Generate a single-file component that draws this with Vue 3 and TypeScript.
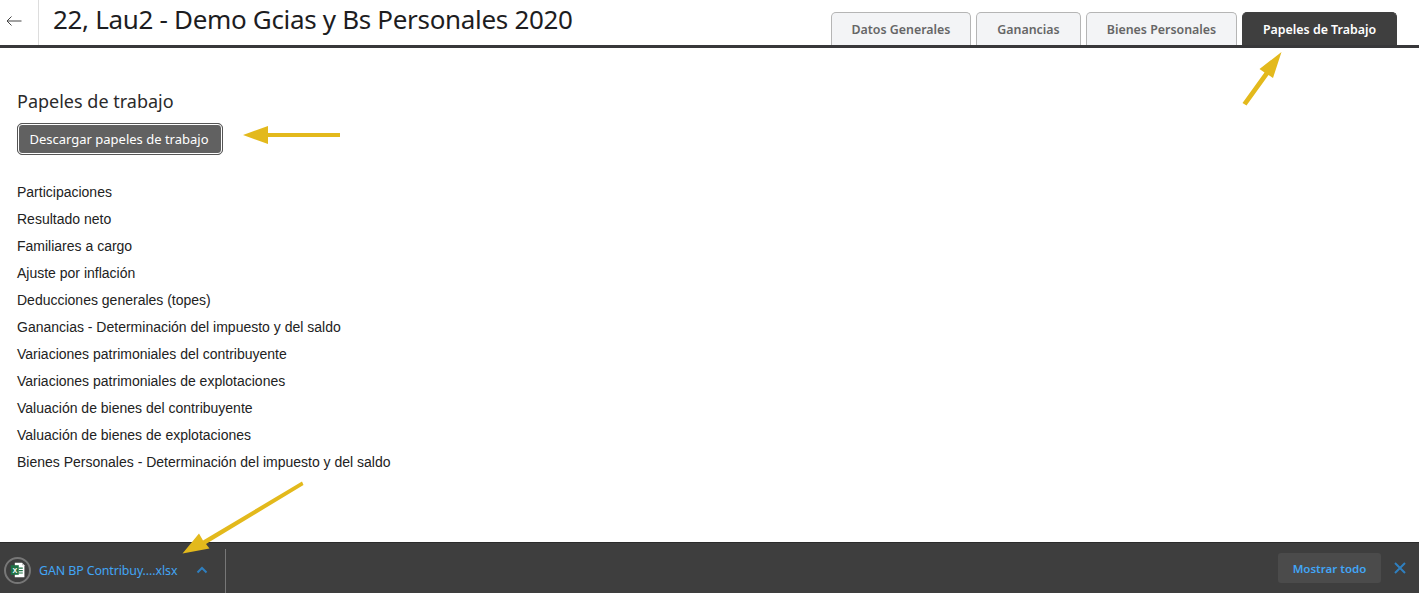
<script setup lang="ts">
const tabs = [
  { label: 'Datos Generales', width: 140 },
  { label: 'Ganancias', width: 105 },
  { label: 'Bienes Personales', width: 151 },
  { label: 'Papeles de Trabajo', width: 155, active: true },
]

const papeles = [
  'Participaciones',
  'Resultado neto',
  'Familiares a cargo',
  'Ajuste por inflación',
  'Deducciones generales (topes)',
  'Ganancias - Determinación del impuesto y del saldo',
  'Variaciones patrimoniales del contribuyente',
  'Variaciones patrimoniales de explotaciones',
  'Valuación de bienes del contribuyente',
  'Valuación de bienes de explotaciones',
  'Bienes Personales - Determinación del impuesto y del saldo',
]
</script>

<template>
  <div class="page">
    <header class="header">
      <button class="back" aria-label="Volver">
        <svg width="16" height="12" viewBox="0 0 16 12" fill="none" stroke="#444" stroke-width="1">
          <path d="M15.5 6H1M5.5 1.5L1 6l4.5 4.5" />
        </svg>
      </button>
      <h1 class="title">22, Lau2 - Demo Gcias y Bs Personales 2020</h1>
      <nav class="tabs">
        <div
          v-for="tab in tabs"
          :key="tab.label"
          class="tab"
          :class="{ active: tab.active }"
          :style="{ width: tab.width + 'px' }"
        >
          {{ tab.label }}
        </div>
      </nav>
    </header>

    <main class="content">
      <h2 class="heading">Papeles de trabajo</h2>
      <button class="download">Descargar papeles de trabajo</button>
      <ul class="list">
        <li v-for="item in papeles" :key="item">{{ item }}</li>
      </ul>
    </main>

    <footer class="downloads">
      <div class="file">
        <span class="file-icon">
          <svg width="20" height="20" viewBox="0 0 20 20">
            <path d="M6 1h9l3 3v15H6z" fill="#fff" />
            <path d="M15 1l3 3h-3z" fill="#bbb" />
            <path d="M11 7h5v1.5h-5zM11 10h5v1.5h-5zM11 13h5v1.5h-5z" fill="#1e7145" />
            <rect x="1" y="4" width="10" height="12" fill="#1e7145" />
            <text x="6" y="13.5" class="x-mark">X</text>
          </svg>
        </span>
        <span class="file-name">GAN BP Contribuy....xlsx</span>
        <svg class="chevron" width="12" height="8" viewBox="0 0 12 8" fill="none" stroke="#2f7fbf" stroke-width="2">
          <path d="M1.5 6.5L6 2l4.5 4.5" />
        </svg>
      </div>
      <div class="spacer"></div>
      <button class="show-all">Mostrar todo</button>
      <svg class="close" width="12" height="12" viewBox="0 0 12 12" fill="none" stroke="#2f7fbf" stroke-width="2">
        <path d="M1 1l10 10M11 1L1 11" />
      </svg>
    </footer>

    <!-- flechas de anotación sobre la captura -->
    <svg class="arrows" width="1419" height="593" viewBox="0 0 1419 593">
      <g fill="#e3b91c" stroke="none">
        <path d="M1242.5 103L1264.5 72.5L1259.5 69L1281.5 52L1273 78L1268.5 75L1246.5 105.5z" />
        <path d="M340 133H268v-7L243 135l25 9v-7h72z" />
        <path d="M302 481.5L303.5 485L206 544L209.5 548.5L182.5 553.5L199 533.5L203 540.5z" />
      </g>
    </svg>
  </div>
</template>

<style>
html,
body {
  margin: 0;
  background: #fff;
}
</style>

<style scoped>
.page {
  position: relative;
  height: 593px;
  display: flex;
  flex-direction: column;
  overflow: hidden;
  font-family: 'Noto Sans', sans-serif;
  color: #222;
}
.header {
  height: 45px;
  display: flex;
  border-bottom: 3px solid #38383a;
  flex-shrink: 0;
}
.back {
  width: 39px;
  padding: 0 0 3px 6px;
  border: 0;
  border-right: 1px solid #ddd;
  background: #fff;
  display: flex;
  align-items: center;
  justify-content: flex-start;
}
.title {
  margin: 0 0 0 14px;
  font-size: 26px;
  font-weight: 400;
  letter-spacing: -0.32px;
  line-height: 39px;
  color: #1d1d1f;
  white-space: nowrap;
}
.tabs {
  margin-left: auto;
  margin-right: 22px;
  padding-top: 12px;
  display: flex;
  gap: 5px;
}
.tab {
  box-sizing: border-box;
  height: 33px;
  display: flex;
  align-items: center;
  justify-content: center;
  border: 1px solid #b5b5b5;
  border-bottom: 0;
  border-radius: 5px 5px 0 0;
  background: #f3f4f6;
  color: #666;
  font-size: 12.4px;
  font-weight: 600;
}
.tab.active {
  background: #3f3f3f;
  border-color: #3f3f3f;
  color: #fff;
}
.content {
  flex: 1;
  padding: 41px 17px 0;
}
.heading {
  margin: 0;
  font-size: 18px;
  font-weight: 400;
  line-height: 24px;
  color: #2a2a2a;
}
.download {
  display: block;
  box-sizing: border-box;
  margin-top: 10px;
  width: 206px;
  height: 32px;
  padding: 0 2px 0 0;
  border: 1px solid #555;
  outline: 1px solid #fff;
  outline-offset: -2px;
  border-radius: 5px;
  background: #616161;
  color: #fff;
  font-family: inherit;
  font-size: 13px;
  font-weight: 400;
}
.list {
  list-style: none;
  margin: 24px 0 0;
  padding: 0;
  font-family: 'Liberation Sans', sans-serif;
  font-size: 14px;
  line-height: 27px;
  color: #222;
}
.downloads {
  height: 50px;
  flex-shrink: 0;
  display: flex;
  align-items: center;
  border-top: 1px solid #2b2b2b;
  background: #3e3e3e;
}
.file {
  width: 226px;
  height: 44px;
  padding-bottom: 2px;
  align-self: flex-end;
  box-sizing: border-box;
  display: flex;
  align-items: center;
  border-right: 1px solid #777;
}
.file-icon {
  box-sizing: border-box;
  width: 27px;
  height: 27px;
  margin-left: 4px;
  border: 2px solid #777;
  border-radius: 50%;
  display: flex;
  align-items: center;
  justify-content: center;
}
.file-icon svg {
  width: 16px;
  height: 16px;
}
.x-mark {
  font-family: 'Liberation Sans', sans-serif;
  font-size: 9px;
  font-weight: 700;
  fill: #fff;
  text-anchor: middle;
}
.file-name {
  width: 139px;
  margin-left: 8px;
  font-size: 12.4px;
  letter-spacing: -0.1px;
  color: #42a5f5;
  white-space: nowrap;
}
.chevron {
  margin-left: 18px;
}
.spacer {
  flex: 1;
}
.show-all {
  box-sizing: border-box;
  width: 103px;
  height: 30px;
  padding: 0;
  border: 0;
  border-radius: 3px;
  background: #4b4b4b;
  color: #42a5f5;
  font-family: inherit;
  font-size: 11.5px;
  font-weight: 600;
}
.close {
  margin: 0 13px;
}
.arrows {
  position: absolute;
  inset: 0;
  pointer-events: none;
}
</style>
